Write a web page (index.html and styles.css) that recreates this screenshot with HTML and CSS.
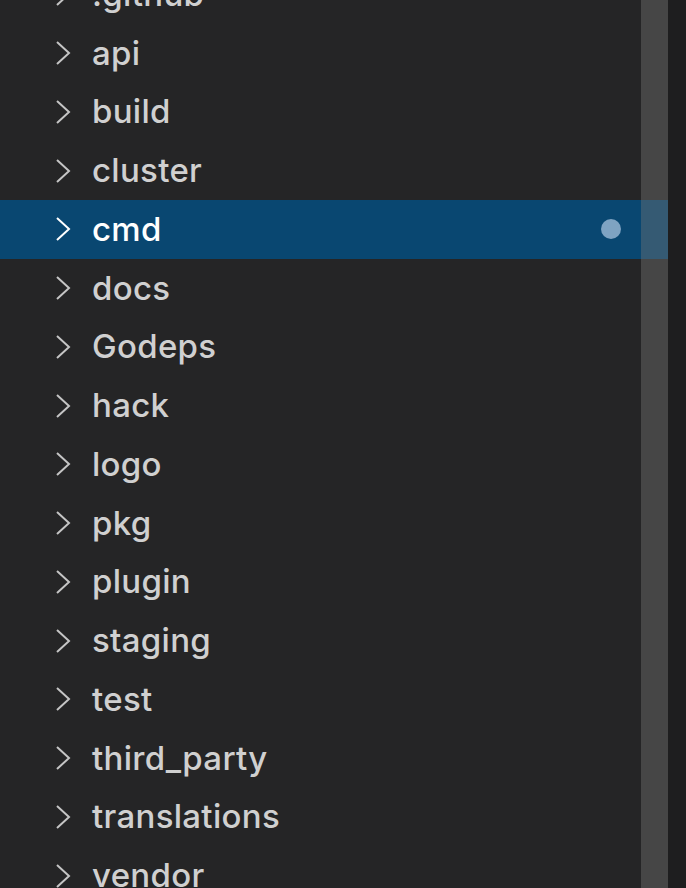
FILE: index.html
```html
<!DOCTYPE html>
<html>
<head>
<meta charset="utf-8">
<link rel="stylesheet" href="styles.css">
</head>
<body>
<div class="app">
  <div class="explorer">
    <ul class="tree">
      <li class="row"><svg class="chev" viewBox="0 0 16 24"><path d="M2 1 L14 12 L2 23"/></svg><span class="name">.github</span></li>
      <li class="row"><svg class="chev" viewBox="0 0 16 24"><path d="M2 1 L14 12 L2 23"/></svg><span class="name">api</span></li>
      <li class="row"><svg class="chev" viewBox="0 0 16 24"><path d="M2 1 L14 12 L2 23"/></svg><span class="name">build</span></li>
      <li class="row"><svg class="chev" viewBox="0 0 16 24"><path d="M2 1 L14 12 L2 23"/></svg><span class="name">cluster</span></li>
      <li class="row selected"><svg class="chev" viewBox="0 0 16 24"><path d="M2 1 L14 12 L2 23"/></svg><span class="name">cmd</span><span class="dot"></span></li>
      <li class="row"><svg class="chev" viewBox="0 0 16 24"><path d="M2 1 L14 12 L2 23"/></svg><span class="name">docs</span></li>
      <li class="row"><svg class="chev" viewBox="0 0 16 24"><path d="M2 1 L14 12 L2 23"/></svg><span class="name">Godeps</span></li>
      <li class="row"><svg class="chev" viewBox="0 0 16 24"><path d="M2 1 L14 12 L2 23"/></svg><span class="name">hack</span></li>
      <li class="row"><svg class="chev" viewBox="0 0 16 24"><path d="M2 1 L14 12 L2 23"/></svg><span class="name">logo</span></li>
      <li class="row"><svg class="chev" viewBox="0 0 16 24"><path d="M2 1 L14 12 L2 23"/></svg><span class="name">pkg</span></li>
      <li class="row"><svg class="chev" viewBox="0 0 16 24"><path d="M2 1 L14 12 L2 23"/></svg><span class="name">plugin</span></li>
      <li class="row"><svg class="chev" viewBox="0 0 16 24"><path d="M2 1 L14 12 L2 23"/></svg><span class="name">staging</span></li>
      <li class="row"><svg class="chev" viewBox="0 0 16 24"><path d="M2 1 L14 12 L2 23"/></svg><span class="name">test</span></li>
      <li class="row"><svg class="chev" viewBox="0 0 16 24"><path d="M2 1 L14 12 L2 23"/></svg><span class="name">third_party</span></li>
      <li class="row"><svg class="chev" viewBox="0 0 16 24"><path d="M2 1 L14 12 L2 23"/></svg><span class="name">translations</span></li>
      <li class="row"><svg class="chev" viewBox="0 0 16 24"><path d="M2 1 L14 12 L2 23"/></svg><span class="name">vendor</span></li>
    </ul>
    <div class="scrollbar"></div>
  </div>
  <div class="edge"></div>
</div>
</body>
</html>
```

FILE: styles.css
```css
html, body {
  margin: 0;
  padding: 0;
  background: #252526;
}

.app {
  display: flex;
  width: 686px;
  height: 888px;
  overflow: hidden;
}

.explorer {
  position: relative;
  width: 668px;
  height: 888px;
  overflow: hidden;
  background: #252526;
}

.edge {
  flex: 1;
  background: #1e1e1f;
}

.tree {
  list-style: none;
  margin: -35px 0 0 0;
  padding: 0;
}

.row {
  display: flex;
  align-items: center;
  height: 58.75px;
  padding-left: 55px;
  padding-right: 47px;
  font-family: Inter, "Liberation Sans", sans-serif;
  font-size: 33px;
  font-weight: 500;
  letter-spacing: 0.3px;
  color: #d0d0d0;
}

.chev {
  width: 16px;
  height: 24px;
  flex: none;
  margin-right: 21px;
}

.chev path {
  fill: none;
  stroke: #c5c5c5;
  stroke-width: 2;
}

.name {
  flex: 1;
  line-height: 1;
}

.selected {
  background: #094771;
  color: #ffffff;
}

.selected .chev path {
  stroke: #ffffff;
}

.dot {
  width: 20px;
  height: 20px;
  border-radius: 50%;
  background: #7fa3c2;
  flex: none;
}

.scrollbar {
  position: absolute;
  top: 0;
  right: 0;
  width: 27px;
  height: 100%;
  background: rgba(121, 121, 121, 0.4);
}
```
